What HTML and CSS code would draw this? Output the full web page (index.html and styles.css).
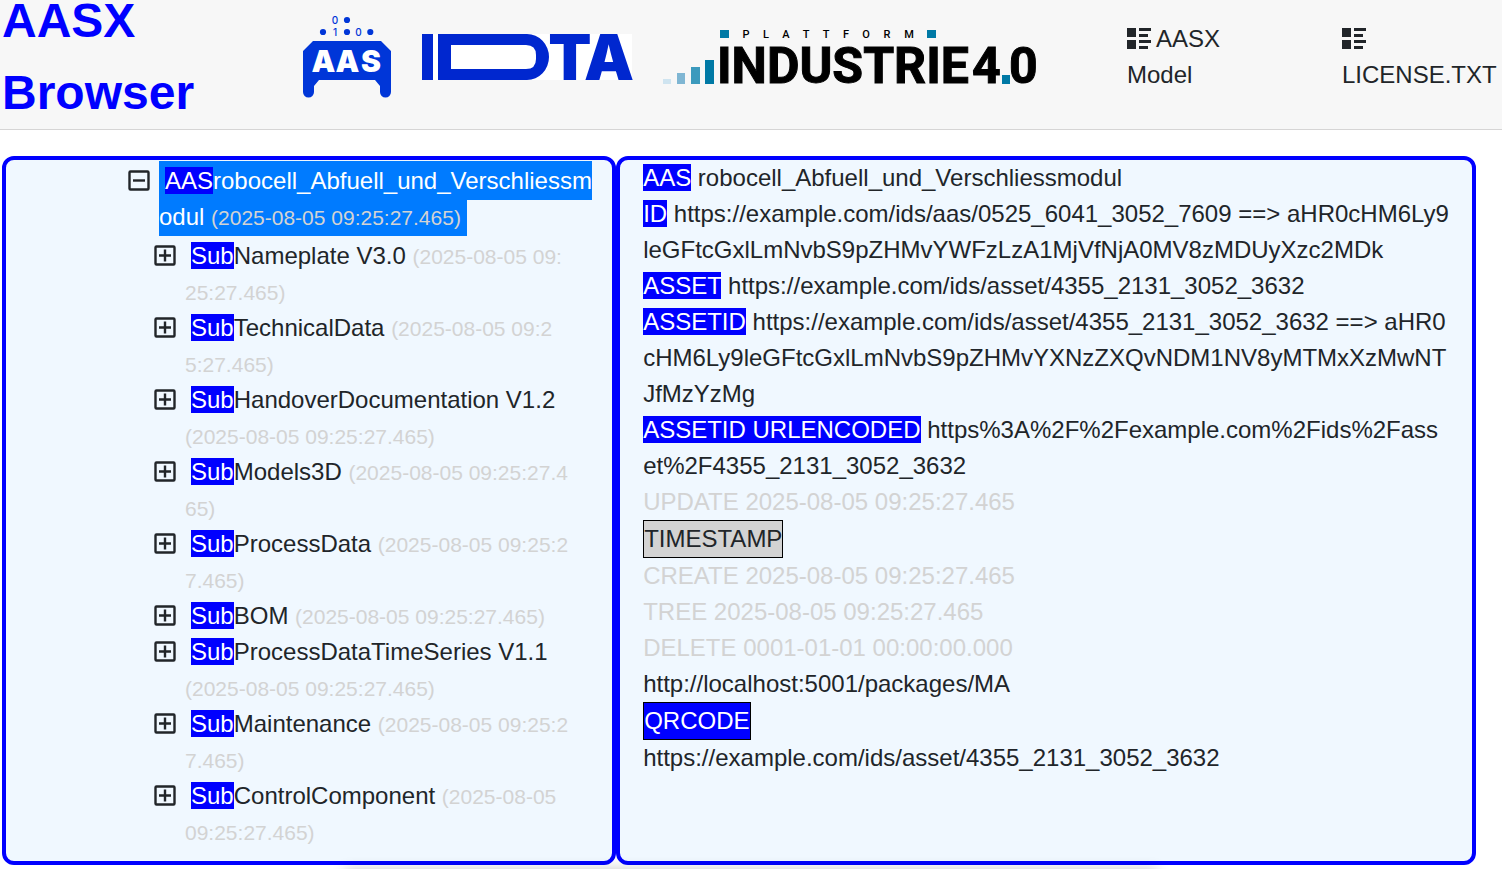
FILE: index.html
```html
<!DOCTYPE html>
<html lang="en">
<head>
<meta charset="utf-8">
<meta name="viewport" content="width=device-width, initial-scale=1">
<title>AASX Browser</title>
<link rel="stylesheet" href="styles.css">
</head>
<body>
<svg class="sprite" aria-hidden="true">
  <symbol id="list-rich" viewBox="0 0 8 7"><path d="M0 0v3h3v-3h-3zm4 0v1h4v-1h-4zm0 2v1h3v-1h-3zm-4 2v3h3v-3h-3zm4 0v1h4v-1h-4zm0 2v1h3v-1h-3z"/></symbol>
  <symbol id="plus" viewBox="0 0 22 22"><rect x="1.500" y="1.500" width="19" height="18" rx="1" fill="none" stroke="currentColor" stroke-width="2.400"/><path d="M5 10.500h12M11 4.500v12" stroke="currentColor" stroke-width="2.400" fill="none"/></symbol>
  <symbol id="minus" viewBox="0 0 22 22"><rect x="1.500" y="1.500" width="19" height="18" rx="1" fill="none" stroke="currentColor" stroke-width="2.400"/><path d="M5 10.500h12" stroke="currentColor" stroke-width="2.400"/></symbol>
</svg>

<header class="topbar">
  <h1 class="title">AASX Browser</h1>
  <div class="logos">
    <svg width="89" height="82" viewBox="302 16 89 82" role="img" aria-label="AAS">
      <g fill="#0036d8">
        <circle cx="347" cy="20" r="3.1"/><circle cx="323" cy="32" r="3.1"/><circle cx="347" cy="32" r="3.1"/><circle cx="370.300" cy="32" r="3.1"/>
        <path d="M313 41H381L391 51V92a5.500 5.500 0 0 1-11 0V86L375 80H319L314 86V92a5.500 5.500 0 0 1-11 0V51Z"/>
        <text class="logo-bits" x="335" y="24">0</text>
        <text class="logo-bits" x="335" y="36">1</text>
        <text class="logo-bits" x="358.500" y="36">0</text>
      </g>
      <g class="logo-aas"><text x="323.500" y="72">A</text><text x="347.500" y="72">A</text><text x="371" y="72">S</text></g>
    </svg>
    <svg width="210" height="46" viewBox="0 0 210 46" role="img" aria-label="IDTA">
      <rect width="210" height="46" fill="#fff"/>
      <g fill="#0027cf">
        <rect width="11" height="46"/>
        <path fill-rule="evenodd" d="M16 0H105A22 23 0 0 1 105 46H16ZM29 11V35H104Q114 35 114 25V21Q114 11 104 11Z"/>
        <text class="logo-ta" x="148" y="46">T</text>
        <text class="logo-ta" x="187" y="46">A</text>
      </g>
    </svg>
    <svg width="374" height="54" viewBox="663 30 374 54" role="img" aria-label="Plattform Industrie 4.0">
      <rect x="663" y="79" width="8" height="5" fill="#cfe4f0"/>
      <rect x="677" y="73" width="8" height="11" fill="#7fb6d3"/>
      <rect x="691" y="67" width="9" height="17" fill="#3c9abd"/>
      <g class="logo-small"><text x="746">P</text><text x="766">L</text><text x="786">A</text><text x="806">T</text><text x="826">T</text><text x="846">F</text><text x="866">O</text><text x="887">R</text><text x="909">M</text></g>
      <text class="logo-industrie" x="717" y="83">INDUSTRIE</text>
      <text class="logo-industrie" x="972" y="83">4</text>
      <text class="logo-industrie" x="1009" y="83">0</text>
      <g fill="#0079a5">
        <rect x="705" y="60" width="9" height="24"/><rect x="720" y="30" width="9" height="8"/><rect x="927" y="30" width="9" height="8"/><rect x="1002" y="75" width="8" height="9"/>
      </g>
    </svg>
  </div>
  <a class="nav-link nav-link-short" href="#model"><svg class="nav-icon" aria-hidden="true"><use href="#list-rich"/></svg>AASX Model</a>
  <a class="nav-link" href="#license"><svg class="nav-icon" aria-hidden="true"><use href="#list-rich"/></svg>LICENSE.TXT</a>
</header>

<main class="panels">
  <section class="panel tree" aria-label="Tree">
    <ul class="nodes">
      <li>
        <div class="node"><button class="toggle" aria-label="Collapse"><svg><use href="#minus"/></svg></button><div class="node-text"><span class="label selected"><span class="tag">AAS</span>robocell_Abfuell_und_Verschliessmodul <span class="time">(2025-08-05 09:25:27.465)</span></span></div></div>
        <ul class="nodes children">
          <li class="node"><button class="toggle" aria-label="Expand"><svg><use href="#plus"/></svg></button><div class="node-text"><span class="label"><span class="tag">Sub</span>Nameplate V3.0 <span class="time">(2025-08-05 09:25:27.465)</span></span></div></li>
          <li class="node"><button class="toggle" aria-label="Expand"><svg><use href="#plus"/></svg></button><div class="node-text"><span class="label"><span class="tag">Sub</span>TechnicalData <span class="time">(2025-08-05 09:25:27.465)</span></span></div></li>
          <li class="node"><button class="toggle" aria-label="Expand"><svg><use href="#plus"/></svg></button><div class="node-text"><span class="label"><span class="tag">Sub</span>HandoverDocumentation V1.2 <span class="time">(2025-08-05 09:25:27.465)</span></span></div></li>
          <li class="node"><button class="toggle" aria-label="Expand"><svg><use href="#plus"/></svg></button><div class="node-text"><span class="label"><span class="tag">Sub</span>Models3D <span class="time">(2025-08-05 09:25:27.465)</span></span></div></li>
          <li class="node"><button class="toggle" aria-label="Expand"><svg><use href="#plus"/></svg></button><div class="node-text"><span class="label"><span class="tag">Sub</span>ProcessData <span class="time">(2025-08-05 09:25:27.465)</span></span></div></li>
          <li class="node"><button class="toggle" aria-label="Expand"><svg><use href="#plus"/></svg></button><div class="node-text"><span class="label"><span class="tag">Sub</span>BOM <span class="time">(2025-08-05 09:25:27.465)</span></span></div></li>
          <li class="node"><button class="toggle" aria-label="Expand"><svg><use href="#plus"/></svg></button><div class="node-text"><span class="label"><span class="tag">Sub</span>ProcessDataTimeSeries V1.1 <span class="time">(2025-08-05 09:25:27.465)</span></span></div></li>
          <li class="node"><button class="toggle" aria-label="Expand"><svg><use href="#plus"/></svg></button><div class="node-text"><span class="label"><span class="tag">Sub</span>Maintenance <span class="time">(2025-08-05 09:25:27.465)</span></span></div></li>
          <li class="node"><button class="toggle" aria-label="Expand"><svg><use href="#plus"/></svg></button><div class="node-text"><span class="label"><span class="tag">Sub</span>ControlComponent <span class="time">(2025-08-05 09:25:27.465)</span></span></div></li>
        </ul>
      </li>
    </ul>
  </section>
  <section class="panel details" aria-label="Details">
    <div><span class="tag">AAS</span> robocell_Abfuell_und_Verschliessmodul</div>
    <div><span class="tag">ID</span> https://example.com/ids/aas/0525_6041_3052_7609 ==&gt; aHR0cHM6Ly9leGFtcGxlLmNvbS9pZHMvYWFzLzA1MjVfNjA0MV8zMDUyXzc2MDk</div>
    <div><span class="tag">ASSET</span> https://example.com/ids/asset/4355_2131_3052_3632</div>
    <div><span class="tag">ASSETID</span> https://example.com/ids/asset/4355_2131_3052_3632 ==&gt; aHR0cHM6Ly9leGFtcGxlLmNvbS9pZHMvYXNzZXQvNDM1NV8yMTMxXzMwNTJfMzYzMg</div>
    <div><span class="tag">ASSETID URLENCODED</span> https%3A%2F%2Fexample.com%2Fids%2Fasset%2F4355_2131_3052_3632</div>
    <div class="muted">UPDATE 2025-08-05 09:25:27.465</div>
    <button class="action action-grey">TIMESTAMP</button>
    <div class="muted">CREATE 2025-08-05 09:25:27.465</div>
    <div class="muted">TREE 2025-08-05 09:25:27.465</div>
    <div class="muted">DELETE 0001-01-01 00:00:00.000</div>
    <div>http://localhost:5001/packages/MA</div>
    <button class="action action-blue">QRCODE</button>
    <div>https://example.com/ids/asset/4355_2131_3052_3632</div>
  </section>
</main>
<div class="edge-shadow"></div>
</body>
</html>
```
FILE: styles.css
```css
*, *::before, *::after { box-sizing: border-box; }

body {
  margin: 0;
  min-height: 100vh;
  display: flex;
  flex-direction: column;
  background: #fff;
  color: #212529;
  font-family: "Liberation Sans", Arial, sans-serif;
  font-size: 24px;
  line-height: 36px;
}

.sprite { position: absolute; width: 0; height: 0; }

.topbar {
  display: grid;
  grid-template-columns: minmax(0, 300fr) minmax(0, 825fr) minmax(0, 215fr) minmax(0, 160fr);
  grid-template-rows: minmax(0, 1fr);
  align-items: center;
  height: 130px;
  padding: 0 0 15px 2px;
  background: #f7f7f7;
  border-bottom: 1px solid #d6d5d5;
}

.title {
  margin: 0;
  color: #00f;
  font-size: 48px;
  line-height: 72px;
}

.logos {
  display: flex;
  align-items: center;
  gap: 31px;
}

.logos svg { flex: none; overflow: visible; }

.logo-bits { font: 500 10px Inter, sans-serif; text-anchor: middle; }
.logo-aas { font: 900 30px Inter, sans-serif; text-anchor: middle; fill: #fff; }
.logo-ta { font: 900 63px Inter, sans-serif; text-anchor: middle; }
.logo-industrie { font: bold 50px Roboto, sans-serif; stroke: #000; stroke-width: 1px; }
.logo-small { font: 500 11px Roboto, sans-serif; text-anchor: middle; transform: translateY(38px); }

.nav-link { color: inherit; text-decoration: none; }
.nav-link-short { padding-right: 80px; }
.nav-icon {
  width: 24px;
  height: 21px;
  margin-right: 5px;
  vertical-align: -2px;
  fill: currentColor;
  shape-rendering: crispEdges;
}

.panels {
  flex: 1;
  display: grid;
  grid-template-columns: minmax(0, 5fr) minmax(0, 7fr);
  margin: 26px 26px 4px 2px;
}

.panel {
  background: #f0f8ff;
  border: 4px solid #00f;
  border-radius: 12px;
  word-break: break-all;
}

.tree { padding: 3px 12px 11px 122px; }
.details { padding: 0 23px; }

.nodes { margin: 0; padding: 0; list-style: none; }
.children { padding: 3px 32px 0 26px; }

.node { display: flex; align-items: flex-start; gap: 7px; }
.node-text { flex: 1; min-width: 0; }

.toggle {
  flex: none;
  display: flex;
  align-items: center;
  width: 24px;
  height: 36px;
  margin: 0;
  padding: 0;
  border: 0;
  background: none;
  color: #212529;
}
.toggle svg { width: 22px; height: 22px; }

.label { padding: 6px; }
.selected { background: #007bff; color: #fff; }
.tag { background: #00f; color: #fff; }
.time { color: #d3d3d3; font-size: 21px; line-height: 30px; }
.node-text { line-height: 36px; }
.muted { color: #d3d3d3; }

.action {
  display: block;
  margin: 0;
  padding: 0;
  border: 1px solid #000;
  font: inherit;
}
.action-grey { background: #d3d3d3; color: #212529; }
.action-blue { background: #00f; color: #fff; }

.edge-shadow {
  position: fixed;
  left: 23%;
  right: 23%;
  bottom: -12px;
  height: 10px;
  box-shadow: 0 0 14px rgba(0, 0, 0, 0.3);
}
```
